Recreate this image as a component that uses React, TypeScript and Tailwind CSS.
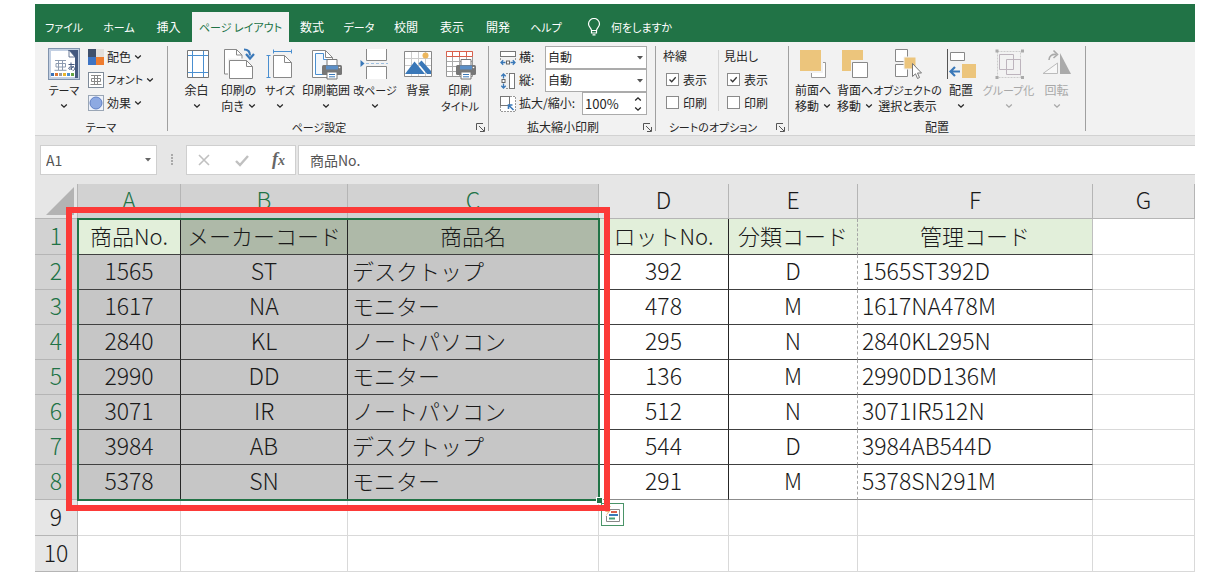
import type { ReactNode } from 'react'

const TABS = [
  { label: 'ファイル', cls: 'w-[58px]' },
  { label: 'ホーム', cls: 'w-[52px]' },
  { label: '挿入', cls: 'w-[47px]' },
  { label: 'ページ レイアウト', cls: 'w-[97px]', active: true },
  { label: '数式', cls: 'w-[46px]' },
  { label: 'データ', cls: 'w-12' },
  { label: '校閲', cls: 'w-[46px]' },
  { label: '表示', cls: 'w-[46px]' },
  { label: '開発', cls: 'w-[46px]' },
  { label: 'ヘルプ', cls: 'w-[50px]' },
]

const COLUMNS = [
  { name: 'A', width: 'w-[103px]' },
  { name: 'B', width: 'w-[167px]' },
  { name: 'C', width: 'w-[251px]' },
  { name: 'D', width: 'w-[130px]' },
  { name: 'E', width: 'w-[129px]' },
  { name: 'F', width: 'w-[235px]' },
  { name: 'G', width: 'w-[102px]' },
]

const ROWS = [
  ['商品No.', 'メーカーコード', '商品名', 'ロットNo.', '分類コード', '管理コード', ''],
  ['1565', 'ST', 'デスクトップ', '392', 'D', '1565ST392D', ''],
  ['1617', 'NA', 'モニター', '478', 'M', '1617NA478M', ''],
  ['2840', 'KL', 'ノートパソコン', '295', 'N', '2840KL295N', ''],
  ['2990', 'DD', 'モニター', '136', 'M', '2990DD136M', ''],
  ['3071', 'IR', 'ノートパソコン', '512', 'N', '3071IR512N', ''],
  ['3984', 'AB', 'デスクトップ', '544', 'D', '3984AB544D', ''],
  ['5378', 'SN', 'モニター', '291', 'M', '5378SN291M', ''],
  ['', '', '', '', '', '', ''],
  ['', '', '', '', '', '', ''],
]

function labelSize(text: string): string {
  return /[ァ-ヶ]/.test(text) ? 'text-[11px]' : 'text-xs'
}

function cellClass(row: number, col: number): string {
  const cls: string[] = []
  const inData = row < 8 && col < 6

  if (row === 0 && (col === 0 || (col > 2 && col < 6))) cls.push('bg-[#e2efda]')
  else if (row === 0 && col < 3) cls.push('bg-[#aeb9a8]')
  else if (row < 8 && col < 3) cls.push('bg-[#c6c6c6]')
  else cls.push('bg-white')

  if (inData && row < 7) cls.push('border-b-[#404040]')
  else if (inData) cls.push('border-b-[#8c8c8c]')
  else cls.push('border-b-[#d9d9d9]')

  if (row < 8 && (col === 0 || col === 1 || col === 3)) cls.push('border-r-[#262626]')
  else if (row < 8 && col === 4) cls.push('[border-right-style:dashed] border-r-[#a6a6a6]')
  else if (row < 8 && col === 5) cls.push('border-r-[#bfbfbf]')
  else cls.push('border-r-[#d9d9d9]')

  const left = row > 0 && (col === 2 || col === 5)
  cls.push(left ? 'text-left pl-1' : 'text-center')
  cls.push(row === 0 || col === 2 ? 'text-[22px]' : 'text-[23px]')
  return cls.join(' ')
}

function Chevron({ className = '' }: { className?: string }) {
  return (
    <svg viewBox="0 0 8 6" className={`w-2 h-1.5 shrink-0 ${className}`} fill="none" stroke="currentColor" strokeWidth="1.3">
      <path d="M1.2 1.5 4 4.2 6.8 1.5" />
    </svg>
  )
}

function Icon({ children }: { children: ReactNode }) {
  return (
    <svg viewBox="0 0 32 32" className="w-8 h-8 shrink-0" fill="none">
      {children}
    </svg>
  )
}

function SmallIcon({ children }: { children: ReactNode }) {
  return (
    <svg viewBox="0 0 16 16" className="w-4 h-4 shrink-0" fill="none">
      {children}
    </svg>
  )
}

function Printer() {
  return (
    <g>
      <path d="M17 17.5v-6h10v6" fill="#fff" stroke="#777" />
      <rect x="12" y="17" width="20" height="10" rx="1.5" fill="#777" />
      <path d="M16 17.5h12v4H16z" fill="#5b8fc7" />
      <circle cx="29.5" cy="19.5" r="0.8" fill="#fff" />
      <path d="M17 24h10v7H17z" fill="#fff" stroke="#777" />
      <path d="M19 26.5h6M19 28.8h6" stroke="#3a78b8" />
    </g>
  )
}

const icons = {
  theme: (
    <Icon>
      <rect x="0.5" y="0.5" width="31" height="31" fill="#c3d0e3" stroke="#8093ad" />
      <path d="M3 3h19l6 6v20H3z" fill="#fff" />
      <path d="M20 2h10v28h-3V9z" fill="#44597f" />
      <path d="M21 2v7h6z" fill="#fff" stroke="#44597f" strokeWidth="0.8" />
      <path d="M7 12.5h11M10.5 12.5V22M14.5 12.5V22M8 15.5h9.5v3.5H8zM6.5 22.3h12" stroke="#8d9bb0" />
      <path d="M20.5 16.5h6M23 14.5c0 3 0 5 .8 7.5M25.5 18c-1 2.5-4.8 4.500-4.800 2.300 0-1.800 6-2.300 6 .3 0 1.300-1 1.800-2 2" stroke="#44597f" />
      <path d="M3 25h3v3H3z" fill="#3a70b5" />
      <path d="M7 25h3v3H7z" fill="#e0762f" />
      <path d="M11 25h3v3h-3z" fill="#999" />
      <path d="M15 25h3v3h-3z" fill="#eab52c" />
      <path d="M19 25h3v3h-3z" fill="#4c8fd0" />
      <path d="M23 25h3v3h-3z" fill="#64a544" />
    </Icon>
  ),
  colors: (
    <SmallIcon>
      <path d="M0 0h8v8H0z" fill="#3f4f6b" />
      <path d="M8 0h8v8H8z" fill="#e3dfdc" />
      <path d="M0 8h8v8H0z" fill="#3e74c4" />
      <path d="M8 8h8v8H8z" fill="#ee7c30" />
    </SmallIcon>
  ),
  fonts: (
    <SmallIcon>
      <rect x="0.5" y="0.5" width="15" height="15" fill="#fff" stroke="#7f8b99" />
      <path d="M3 3.5h10M6.5 3.5v9M9.5 3.5v9M3.5 6.5h9v3h-9zM2.5 12.5h11" stroke="#888" />
    </SmallIcon>
  ),
  effects: (
    <SmallIcon>
      <rect x="0.5" y="0.5" width="15" height="15" fill="#eef2fb" stroke="#9aa6b5" />
      <circle cx="8" cy="8" r="6" fill="#8da9e2" stroke="#5f7fc4" />
    </SmallIcon>
  ),
  margins: (
    <Icon>
      <path d="M6.5 2.5h21v27h-21z" fill="#fff" stroke="#777" />
      <path d="M11.5 3v26M22.5 3v26M7 7.5h20M7 24.5h20" stroke="#4a8fd0" />
    </Icon>
  ),
  orientation: (
    <Icon>
      <path d="M1.5 1.5h12l5.5 5.5v19H1.5z" fill="#fff" stroke="#888" />
      <path d="M13.5 1.5V7H19" stroke="#888" />
      <path d="M5 10.5h20.5v21H5z" fill="#f2f2f2" />
      <path d="M6.5 12.5h17l6 6v12h-23z" fill="#fff" stroke="#888" />
      <path d="M23.5 12.5v6h6" stroke="#888" />
      <path d="M21 1.500c4 0 6 2 6 6" stroke="#3a78b8" strokeWidth="2.200" />
      <path d="m23 6 4 4.500L31 6" stroke="#3a78b8" strokeWidth="2.200" />
    </Icon>
  ),
  size: (
    <Icon>
      <path d="M9 3.5h19M9.5 1.5v4M27.5 1.5v4M4.5 7v23M2.5 7.5h4M2.5 29.5h4" stroke="#4a8fd0" />
      <path d="M9.5 7.5h11l7 7v15h-18z" fill="#fff" stroke="#888" />
      <path d="M20.5 7.5v7h7" stroke="#888" />
    </Icon>
  ),
  area: (
    <Icon>
      <path d="M2.5 2.5h13l7 7v20h-20z" fill="#fff" stroke="#888" />
      <path d="M15.5 2.5v7h7" stroke="#888" />
      <path d="M5.5 5.5h8v6h6v15h-14z" fill="#f2f7fc" stroke="#4a8fd0" />
      <Printer />
    </Icon>
  ),
  breaks: (
    <Icon>
      <path d="M7.5 1v11.5h20V1M7.5 31V18.5h20V31" fill="#fff" stroke="#888" />
      <path d="M7 15.5h22" stroke="#9dbfe0" strokeDasharray="3 2" />
      <path d="m1.5 12 4 3.5-4 3.5z" fill="#3a78b8" />
    </Icon>
  ),
  background: (
    <Icon>
      <path d="M2.5 3.5h27v25h-27z" fill="#fff" stroke="#888" />
      <path d="M9.5 4v24M16.5 4v24M23.5 4v24M3 10.5h26M3 17.5h26" stroke="#ccc" />
      <circle cx="23.5" cy="7.5" r="3" fill="#ecb65c" />
      <path d="m3 26 9.5-12.5L23 26z" fill="#3a78b8" />
      <path d="m16.5 15.5 3-3L29 23v3h-4z" fill="#3a78b8" />
    </Icon>
  ),
  titles: (
    <Icon>
      <path d="M2.5 3.5h26v25h-26z" fill="#fff" stroke="#999" />
      <path d="M8.5 9v19M15.5 9v19M22.5 9v19M3 13.5h25M3 18.5h25M3 23.5h25" stroke="#aaa" />
      <path d="M2.5 3.5h26v5h-26zM8.5 3.5v5M15.5 3.5v5M22.5 3.5v5" fill="#fff" stroke="#d9604c" />
      <Printer />
    </Icon>
  ),
  width: (
    <SmallIcon>
      <rect x="0.5" y="1.5" width="15" height="5" fill="#fff" stroke="#777" />
      <path d="M0.5 8v2M15.5 8v2" stroke="#999" />
      <rect x="6.5" y="11" width="3" height="3" fill="#fff" stroke="#666" />
      <path d="M5.5 12.5H1M3.2 10.3 1 12.5l2.2 2.2M10.5 12.5H15M12.8 10.3l2.2 2.2-2.2 2.2" stroke="#3a78b8" strokeWidth="1.3" />
    </SmallIcon>
  ),
  height: (
    <SmallIcon>
      <rect x="9.5" y="0.5" width="5" height="15" fill="#fff" stroke="#777" />
      <path d="M6 0.5h2M6 15.5h2" stroke="#999" />
      <rect x="2" y="6.5" width="3" height="3" fill="#fff" stroke="#666" />
      <path d="M3.5 5.5V1M1.3 3.2 3.5 1l2.2 2.2M3.5 10.5V15M1.3 12.8 3.5 15l2.2-2.2" stroke="#3a78b8" strokeWidth="1.3" />
    </SmallIcon>
  ),
  scale: (
    <SmallIcon>
      <path d="M10 0.5h5.5v15H.5V10" fill="#fff" stroke="#999" strokeDasharray="2 1" />
      <rect x="0.5" y="0.5" width="9" height="9" fill="#fff" stroke="#777" />
      <path d="M13.500 14 9 9.500M8.500 13V9h4" stroke="#3a78b8" strokeWidth="1.600" />
    </SmallIcon>
  ),
  forward: (
    <Icon>
      <path d="M14.5 14.5h14v15h-14z" fill="#fff" stroke="#999" />
      <path d="M2 1h24v24H2z" fill="#f2f2f2" />
      <path d="M3 2h21v21H3z" fill="#ecc57c" />
    </Icon>
  ),
  backward: (
    <Icon>
      <path d="M3 2h21v21H3z" fill="#ecc57c" />
      <path d="M12 12h18v19H12z" fill="#f2f2f2" />
      <path d="M13.5 14.5h15v15h-15z" fill="#fff" stroke="#888" />
    </Icon>
  ),
  selection: (
    <Icon>
      <path d="M3.5 1.5h12v12h-12zM3.5 16.5h12v12h-12z" fill="#fff" stroke="#888" />
      <path d="M12 9h12v12H12z" fill="#ecc57c" stroke="#f2f2f2" />
      <path d="M20.5 15.5v13l3-2.7 2 4.7 2-1-2-4.5h4z" fill="#fff" stroke="#777" />
    </Icon>
  ),
  align: (
    <Icon>
      <path d="M2.5 1v30" stroke="#555" />
      <path d="M5.5 4.5h14v8h-14z" fill="#fff" stroke="#888" />
      <path d="M17 16h14v14H17z" fill="#ecc57c" />
      <path d="M15 23.5H6M10 19l-4.500 4.500L10 28" stroke="#3a78b8" strokeWidth="2.200" />
    </Icon>
  ),
  group: (
    <Icon>
      <path d="M4.5 3.5h23v26h-23z" stroke="#ccc" strokeDasharray="2 1" />
      <path d="M6.5 6.5h14v15h-14zM13.5 11.5h14v15h-14z" stroke="#bdb4bd" />
      <path d="M2.500 1.500h3v3h-3zM28 1.500h3v3h-3zM2.500 28h3v3h-3zM28 28h3v3h-3z" fill="#aaa" />
    </Icon>
  ),
  rotate: (
    <Icon>
      <path d="M16.5 15v10.5H2z" fill="#f7f7f7" stroke="#bbb" />
      <path d="M19 5v21h11z" fill="#aaa" />
      <path d="M8 12c0-4 3-6 7-5.5" stroke="#aaa" strokeWidth="1.600" />
      <path d="M12.500 2.500 16.500 6.500l-4 3.500" stroke="#aaa" strokeWidth="1.600" />
    </Icon>
  ),
}

interface BigButtonProps {
  icon: ReactNode
  lines: string[]
  width: string
  arrow?: 'below' | 'inline'
  disabled?: boolean
}

function BigButton({ icon, lines, width, arrow, disabled }: BigButtonProps) {
  return (
    <button
      type="button"
      disabled={disabled}
      className={`flex flex-col items-center pt-0.5 leading-4 whitespace-nowrap ${width} ${disabled ? 'text-[#a8a8a8]' : ''}`}
    >
      {icon}
      <span className={`mt-0.5 h-4 ${labelSize(lines[0])}`}>{lines[0]}</span>
      <span className={`flex h-4 items-center gap-1 ${labelSize(lines[1])}`}>
        {lines[1]}
        {arrow && <Chevron />}
      </span>
    </button>
  )
}

function SmallButton({ icon, label }: { icon: ReactNode; label: string }) {
  return (
    <button type="button" className={`flex h-[23px] items-center gap-[3px] pb-0.5 whitespace-nowrap ${labelSize(label)}`}>
      {icon}
      {label}
      <Chevron />
    </button>
  )
}

function Group({ label, width, launcher, children }: { label: string; width: string; launcher?: boolean; children: ReactNode }) {
  return (
    <section className={`flex flex-col border-r border-[#a0a0a0] ${width}`}>
      <div className="flex h-[69px]">{children}</div>
      <div className={`relative h-4 text-center leading-6 whitespace-nowrap ${labelSize(label)} ${launcher ? 'pr-[18px]' : ''}`}>
        {label}
        {launcher && (
          <button type="button" aria-label={label} className="absolute right-[3px] top-2">
            <svg viewBox="0 0 9 9" className="w-[9px] h-[9px]" fill="none" stroke="#555">
              <path d="M.5 7V.5H7M3 3l5 5M8.5 4v4.5H4" />
            </svg>
          </button>
        )}
      </div>
    </section>
  )
}

function ScaleSelect({ icon, label, id }: { icon: ReactNode; label: string; id: string }) {
  return (
    <div className="flex h-[23px] items-center">
      {icon}
      <label htmlFor={id} className="ml-[3px] flex-1 pb-0.5 whitespace-nowrap">{label}</label>
      <span className="relative">
        <select id={id} className="block h-[23px] w-[102px] appearance-none border border-[#ababab] bg-white pb-0.5 pl-0.5 text-xs">
          <option>自動</option>
        </select>
        <svg viewBox="0 0 6 4" className="pointer-events-none absolute right-1 top-2.5 w-1.5 h-1" fill="#555">
          <path d="M0 0h6L3 3.5z" />
        </svg>
      </span>
    </div>
  )
}

function Check({ label, checked }: { label: string; checked?: boolean }) {
  return (
    <label className="flex h-[23px] items-center gap-1 pb-0.5 pl-[3px] whitespace-nowrap">
      <span className="relative flex">
        <input type="checkbox" defaultChecked={checked} className="peer w-[13px] h-[13px] appearance-none border border-[#8a8a8a] bg-white" />
        <svg viewBox="0 0 13 13" className="pointer-events-none absolute inset-0 hidden w-[13px] h-[13px] peer-checked:block" fill="none" stroke="#333" strokeWidth="1.3">
          <path d="m3.5 6.5 2.2 2.2 4-4.4" />
        </svg>
      </span>
      {label}
    </label>
  )
}

function Ribbon() {
  return (
    <div className="flex border-b border-[#d2d2d2] bg-[#f2f2f2] pt-1 pb-1 text-xs text-[#262626]">
      <Group label="テーマ" width="w-[133px]">
        <div className="flex pl-2">
          <BigButton icon={icons.theme} lines={['テーマ', '']} width="w-[42px]" arrow="below" />
          <div className="pl-[3px]">
            <SmallButton icon={icons.colors} label="配色" />
            <SmallButton icon={icons.fonts} label="フォント" />
            <SmallButton icon={icons.effects} label="効果" />
          </div>
        </div>
      </Group>
      <Group label="ページ設定" width="w-[321px]" launcher>
        <div className="flex pl-2">
          <BigButton icon={icons.margins} lines={['余白', '']} width="w-[41px]" arrow="below" />
          <BigButton icon={icons.orientation} lines={['印刷の', '向き']} width="w-[43px]" arrow="inline" />
          <BigButton icon={icons.size} lines={['サイズ', '']} width="w-[40px]" arrow="below" />
          <BigButton icon={icons.area} lines={['印刷範囲', '']} width="w-[52px]" arrow="below" />
          <BigButton icon={icons.breaks} lines={['改ページ', '']} width="w-[46px]" arrow="below" />
          <BigButton icon={icons.background} lines={['背景', '']} width="w-[40px]" />
          <BigButton icon={icons.titles} lines={['印刷', 'タイトル']} width="w-[44px]" />
        </div>
      </Group>
      <Group label="拡大縮小印刷" width="w-[167px]" launcher>
        <div className="flex-1 pl-[11px] pr-2">
          <ScaleSelect icon={icons.width} label="横:" id="fit-width" />
          <ScaleSelect icon={icons.height} label="縦:" id="fit-height" />
          <div className="flex h-[23px] items-center">
            {icons.scale}
            <label htmlFor="zoom" className="ml-[3px] flex-1 pb-0.5 whitespace-nowrap">拡大/縮小:</label>
            <span className="flex h-[23px] w-[65px] items-center border border-[#ababab] bg-white pl-0.5 pr-1">
              <input id="zoom" defaultValue="100%" className="w-0 flex-1 text-[13px] outline-none" />
              <span className="flex flex-col gap-1">
                <button type="button" aria-label="拡大"><Chevron className="rotate-180" /></button>
                <button type="button" aria-label="縮小"><Chevron /></button>
              </span>
            </span>
          </div>
        </div>
      </Group>
      <Group label="シートのオプション" width="w-[133px]" launcher>
        <div className="w-[62px] pl-[7px]">
          <div className="h-[23px] leading-5">枠線</div>
          <Check label="表示" checked />
          <Check label="印刷" />
        </div>
        <div className="my-1 w-px bg-[#d5d5d5]" />
        <div className="pl-[5px]">
          <div className="h-[23px] leading-5">見出し</div>
          <Check label="表示" checked />
          <Check label="印刷" />
        </div>
      </Group>
      <Group label="配置" width="w-[297px]">
        <div className="flex pl-[3px]">
          <BigButton icon={icons.forward} lines={['前面へ', '移動']} width="w-[42px]" arrow="inline" />
          <BigButton icon={icons.backward} lines={['背面へ', '移動']} width="w-[42px]" arrow="inline" />
          <BigButton icon={icons.selection} lines={['オブジェクトの', '選択と表示']} width="w-[63px]" />
          <BigButton icon={icons.align} lines={['配置', '']} width="w-[44px]" arrow="below" />
          <BigButton icon={icons.group} lines={['グループ化', '']} width="w-[51px]" arrow="below" disabled />
          <BigButton icon={icons.rotate} lines={['回転', '']} width="w-[45px]" arrow="below" disabled />
        </div>
      </Group>
    </div>
  )
}

function FormulaBar() {
  return (
    <div className="flex bg-[#e6e6e6] pt-[9px] pb-[9px] pl-[5px] text-[#555]">
      <div className="flex h-[30px] w-[117px] items-center border border-[#cfcfcf] bg-white px-[5px]">
        <input aria-label="名前ボックス" defaultValue="A1" className="w-0 flex-1 text-sm outline-none" />
        <button type="button" aria-label="名前の一覧">
          <svg viewBox="0 0 6 4" className="w-1.5 h-1" fill="#666">
            <path d="M0 0h6L3 3.5z" />
          </svg>
        </button>
      </div>
      <svg viewBox="0 0 29 30" className="w-[29px] h-[30px]" fill="#aaa">
        <path d="M14 9h2v2h-2zM14 12h2v2h-2zM14 15h2v2h-2zM14 18h2v2h-2z" />
      </svg>
      <div className="flex h-[30px] w-[110px] items-center justify-between border border-[#cfcfcf] bg-white px-2.5">
        <button type="button" aria-label="キャンセル">
          <svg viewBox="0 0 14 14" className="w-3.5 h-3.5" fill="none" stroke="#c0c0c0" strokeWidth="1.6">
            <path d="m2 2 10 10M12 2 2 12" />
          </svg>
        </button>
        <button type="button" aria-label="入力">
          <svg viewBox="0 0 14 14" className="w-3.5 h-3.5" fill="none" stroke="#c0c0c0" strokeWidth="2.4">
            <path d="m1 8 4 4 8-9" />
          </svg>
        </button>
        <button type="button" className="font-['Liberation_Serif',serif] text-lg leading-5 font-bold text-[#666] italic">
          f<span className="text-sm">x</span>
        </button>
      </div>
      <input
        aria-label="数式バー"
        defaultValue="商品No."
        className="ml-0.5 h-[30px] min-w-0 flex-1 border-y border-l border-[#cfcfcf] bg-white pl-[11px] text-sm outline-none"
      />
    </div>
  )
}

function Sheet() {
  return (
    <div className="relative">
      <table className="w-full table-fixed border-separate border-spacing-0 text-[#1a1a1a] font-light">
        <colgroup>
          <col className="w-[43px]" />
          {COLUMNS.map(c => <col key={c.name} className={c.width} />)}
        </colgroup>
        <thead>
          <tr className="h-[35px] text-[23px] leading-[30px]">
            <th className="border-b border-r border-[#b5b5b5] bg-[#e6e6e6] p-0">
              <svg viewBox="0 0 42 34" className="block w-[42px] h-[34px]" fill="#b3b3b3">
                <path d="M39 3v28H11z" />
              </svg>
            </th>
            {COLUMNS.map((c, i) => (
              <th
                key={c.name}
                className={`border-b border-r border-[#b5b5b5] p-0 pb-1 font-light ${i < 3 ? 'bg-[#d2d2d2] text-[#217346]' : 'bg-[#e6e6e6]'}`}
              >
                {c.name}
              </th>
            ))}
          </tr>
        </thead>
        <tbody>
          {ROWS.map((row, r) => (
            <tr key={r} className={r === 0 || r > 7 ? 'h-9' : 'h-[35px]'}>
              <th
                className={`border-b border-r border-[#b5b5b5] p-0 pb-1 text-[23px] leading-[30px] font-light ${r < 8 ? 'bg-[#d2d2d2] text-[#217346]' : 'bg-[#e6e6e6]'}`}
              >
                {r + 1}
              </th>
              {row.map((value, c) => (
                <td key={c} className={`border-b border-r p-0 pb-1 leading-[30px] whitespace-nowrap ${cellClass(r, c)}`}>
                  {value}
                </td>
              ))}
            </tr>
          ))}
        </tbody>
      </table>

      {/* current selection, A1:C8 */}
      <div className="pointer-events-none absolute left-[42px] top-[34px] h-[283px] w-[523px] border-2 border-[#217346]">
        <div className="absolute -right-1 -bottom-1 w-[5px] h-[5px] bg-[#217346] outline outline-white" />
      </div>
      <button type="button" aria-label="クイック分析" className="absolute left-[566px] top-[319px] w-[23px] h-[23px] border border-[#4a9468] bg-white">
        <svg viewBox="0 0 21 21" className="w-[21px] h-[21px]" fill="none">
          <path d="M4.5 12v5.5h13v-12H8" stroke="#888" />
          <path d="M9 8h6" stroke="#d9604c" strokeWidth="2" />
          <path d="M7 11h9" stroke="#3a78b8" strokeWidth="2" />
          <path d="M7 14.5h6" stroke="#46a078" strokeWidth="2" />
          <path d="M7 2 3 8h3l-3 5 6-7H6l3-4z" fill="#ecb07c" />
        </svg>
      </button>
      <div className="pointer-events-none absolute left-[31px] top-[23px] h-[304px] w-[544px] border-6 border-[#fc3a38]" />
    </div>
  )
}

export default function App() {
  return (
    <div className="bg-white px-[35px] pt-1 pb-1 font-['Noto_Sans_CJK_JP',sans-serif]">
      <div className="[font-feature-settings:'palt']">
        <nav className="flex h-[38px] bg-[#217346] pt-2 text-white">
          {TABS.map(t => (
            <button
              key={t.label}
              type="button"
              className={`whitespace-nowrap ${labelSize(t.label)} ${t.cls} ${t.active ? 'bg-[#f2f2f2] text-[#217346]' : ''}`}
            >
              {t.label}
            </button>
          ))}
          <button type="button" className="ml-4 flex items-center gap-2.5 text-[11px] whitespace-nowrap">
            <svg viewBox="0 0 14 18" className="w-3.5 h-[18px]" fill="none" stroke="#fff" strokeWidth="1.2">
              <path d="M4.5 12.5c0-2.5-3-3.5-3-6.5a5.5 5.5 0 0 1 11 0c0 3-3 4-3 6.5zM4.5 12.5V15h5v-2.5M5.5 16.8h3" />
            </svg>
            何をしますか
          </button>
        </nav>
        <Ribbon />
      </div>
      <FormulaBar />
      <Sheet />
    </div>
  )
}
